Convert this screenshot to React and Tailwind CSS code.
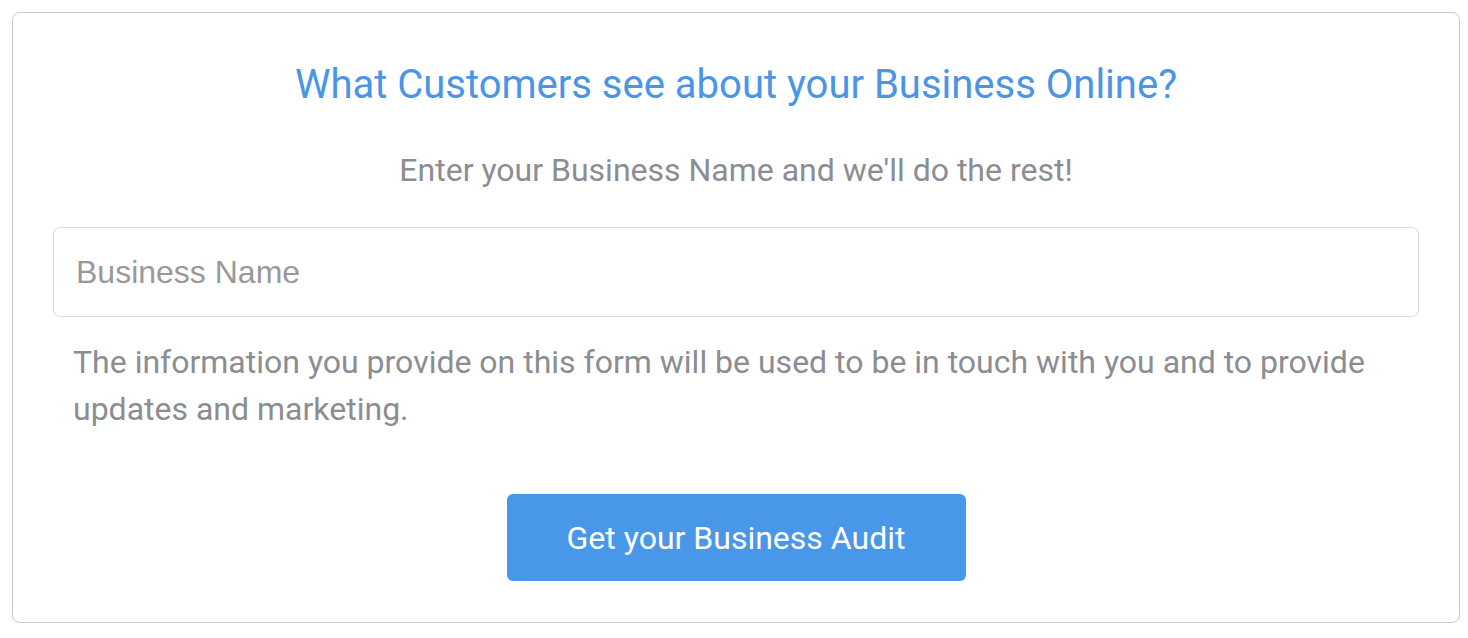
import React from 'react';

export default function App() {
  return (
    <div className="min-h-screen bg-white pl-3 pr-2 pt-3 pb-3 font-['Roboto',sans-serif]">
      {/* Audit card */}
      <div className="border border-[#c9c9c9] rounded-lg px-10 pt-[50px] pb-[41px] flex flex-col">
        <h1 className="text-center text-[40px] leading-[44px] font-normal text-[#4a95e6]">
          What Customers see about your Business Online?
        </h1>
        <p className="mt-[45px] text-center text-[32px] leading-[36px] text-[#8b8d93]">
          Enter your Business Name and we'll do the rest!
        </p>

        <input
          type="text"
          placeholder="Business Name"
          className="mt-[39px] h-[90px] w-full border border-[#d5d8dd] rounded-lg px-[22px] text-[32px] font-['Liberation_Sans',Arial,sans-serif] text-[#555] placeholder:text-[#999999] outline-none"
        />

        <p className="mt-[22px] px-5 text-[32px] leading-[47px] text-[#8b8d93]">
          The information you provide on this form will be used to be in touch with you and to provide updates and marketing.
        </p>

        <div className="mt-[61px] flex justify-center">
          <button className="w-[459px] h-[87px] bg-[#4897e9] rounded-md text-white text-[32px]">
            Get your Business Audit
          </button>
        </div>
      </div>
    </div>
  );
}
